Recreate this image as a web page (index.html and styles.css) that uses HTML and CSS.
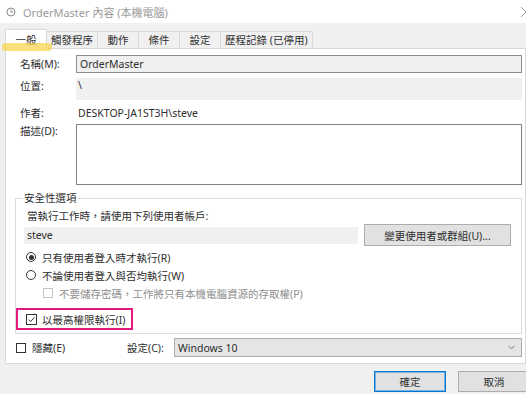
FILE: index.html
```html
<!DOCTYPE html>
<html lang="zh-Hant">
<head>
  <meta charset="UTF-8">
  <meta name="viewport" content="width=device-width, initial-scale=1.0">
  <title>OrderMaster 內容 (本機電腦)</title>
  <link rel="stylesheet" href="styles.css">
</head>
<body>
  <div class="window">
    <div class="titlebar">
      <svg class="title-icon" viewBox="0 0 10 10">
        <circle cx="5" cy="5" r="4" fill="none" stroke="#8a8a8a" stroke-width="1"/>
        <path d="M5 2.6V5h2" fill="none" stroke="#8a8a8a" stroke-width="1"/>
      </svg>
      <span class="title">OrderMaster 內容 (本機電腦)</span>
      <svg class="close" viewBox="0 0 10 10">
        <path d="M0 0L10 10M0 10L10 0" stroke="#9a9a9a" stroke-width="1"/>
      </svg>
    </div>

    <div class="tabs">
      <div class="tab active">一般</div>
      <div class="tab">觸發程序</div>
      <div class="tab">動作</div>
      <div class="tab">條件</div>
      <div class="tab">設定</div>
      <div class="tab">歷程記錄 (已停用)</div>
    </div>
    <div class="marker"></div>

    <div class="panel">
      <div class="row row-name">
        <span class="label">名稱(M):</span>
        <div class="field input">OrderMaster</div>
      </div>
      <div class="row row-loc">
        <span class="label">位置:</span>
        <div class="field readonly">\</div>
      </div>
      <div class="row row-author">
        <span class="label">作者:</span>
        <div class="field plain">DESKTOP-JA1ST3H\steve</div>
      </div>
      <div class="row row-desc">
        <span class="label">描述(D):</span>
        <div class="field textarea"></div>
      </div>

      <fieldset class="group">
        <legend>安全性選項</legend>
        <div class="hint">當執行工作時，請使用下列使用者帳戶:</div>
        <div class="user-row">
          <div class="user">steve</div>
          <button class="btn btn-change">變更使用者或群組(U)...</button>
        </div>
        <div class="option"><span class="radio checked"></span>只有使用者登入時才執行(R)</div>
        <div class="option"><span class="radio"></span>不論使用者登入與否均執行(W)</div>
        <div class="option sub disabled"><span class="check"></span>不要儲存密碼，工作將只有本機電腦資源的存取權(P)</div>
        <div class="option highlight">
          <span class="check checked">
            <svg viewBox="0 0 10 10"><path d="M1.8 5L4 7.3L8.3 2.6" fill="none" stroke="#222" stroke-width="1"/></svg>
          </span>以最高權限執行(I)
        </div>
      </fieldset>

      <div class="bottom-row">
        <div class="option hidden-opt"><span class="check"></span>隱藏(E)</div>
        <span class="config-label">設定(C):</span>
        <div class="select">
          <span>Windows 10</span>
          <svg class="chevron" viewBox="0 0 8 5"><path d="M0.5 0.5L4 4L7.5 0.5" fill="none" stroke="#666" stroke-width="1"/></svg>
        </div>
      </div>
    </div>

    <div class="footer">
      <button class="btn btn-ok">確定</button>
      <button class="btn btn-cancel">取消</button>
    </div>
  </div>
</body>
</html>
```

FILE: styles.css
```css
html {
  background: #fff;
}
body {
  margin: 0;
  font-family: "Noto Sans", "Noto Sans CJK TC", sans-serif;
  font-size: 10.5px;
  color: #2e2e2e;
}
.window {
  position: relative;
  width: 526px;
  height: 394px;
  background: #f0f0f0;
  overflow: hidden;
}
.titlebar {
  display: flex;
  align-items: center;
  height: 23px;
  padding-left: 6px;
  box-sizing: border-box;
  background: #fff;
}
.title-icon {
  width: 10px;
  height: 10px;
  margin-right: 7px;
}
.title {
  color: #9a9a9a;
  font-size: 11px;
}
.close {
  width: 10px;
  height: 10px;
  margin-left: auto;
  margin-right: -5px;
}
.tabs {
  display: flex;
  align-items: flex-end;
  height: 25px;
  padding-left: 5px;
}
.tab {
  min-width: 42px;
  height: 17px;
  line-height: 16px;
  padding: 0 4px;
  margin-right: -1px;
  box-sizing: border-box;
  text-align: center;
  border: 1px solid #d9d9d9;
  border-bottom: none;
}
.tab.active {
  position: relative;
  z-index: 1;
  height: 20px;
  margin-bottom: -1px;
  padding-top: 2px;
  background: #fff;
}
.marker {
  position: absolute;
  left: 2px;
  top: 43px;
  width: 50px;
  height: 8px;
  border-radius: 4px;
  background: rgba(248, 210, 70, 0.7);
  z-index: 2;
}
.panel {
  width: 521px;
  margin-left: 5px;
  box-sizing: border-box;
  padding: 6px 3px 6px 9px;
  background: #fff;
  border: 1px solid #d9d9d9;
}
.row {
  display: flex;
}
.label {
  flex-shrink: 0;
  width: 61px;
  padding-left: 5px;
  box-sizing: border-box;
  line-height: 14px;
}
.field {
  flex: 1;
  box-sizing: border-box;
  line-height: 14px;
}
.row-name {
  align-items: center;
}
.input {
  height: 18px;
  line-height: 16px;
  padding-left: 3px;
  background: #f0f0f0;
  border: 1px solid #8c8c8c;
}
.row-loc {
  margin-top: 5px;
}
.row-loc .label {
  padding-top: 1px;
}
.readonly {
  height: 22px;
  padding-left: 2px;
  background: #f0f0f0;
}
.row-author {
  margin-top: 6px;
}
.plain {
  padding-left: 2px;
}
.row-desc {
  margin-top: 4px;
}
.textarea {
  height: 61px;
  background: #fff;
  border: 1px solid #828282;
}
.group {
  margin: 6px 0 0;
  padding: 0 10px 3px 7px;
  min-width: 0;
  border: 1px solid #dcdcdc;
}
.group legend {
  padding: 0 1px;
  line-height: 14px;
}
.hint {
  margin-top: 4px;
  padding-left: 4px;
  line-height: 14px;
}
.user-row {
  display: flex;
  align-items: center;
  height: 22px;
  margin-top: 1px;
}
.user {
  width: 334px;
  height: 17px;
  margin-left: 1px;
  padding-left: 3px;
  box-sizing: border-box;
  line-height: 17px;
  background: #f0f0f0;
}
.btn {
  font: inherit;
  color: #2e2e2e;
  padding: 0;
  background: #e1e1e1;
  border: 1px solid #adadad;
  box-sizing: border-box;
}
.btn-change {
  width: 147px;
  height: 22px;
  margin-left: 6px;
}
.option {
  display: flex;
  align-items: center;
  height: 14px;
  margin-top: 4px;
  padding-left: 3px;
}
.radio {
  position: relative;
  width: 10px;
  height: 10px;
  margin-right: 6px;
  box-sizing: border-box;
  border: 1px solid #333;
  border-radius: 50%;
}
.radio.checked::after {
  content: "";
  position: absolute;
  left: 1.5px;
  top: 1.5px;
  width: 5px;
  height: 5px;
  border-radius: 50%;
  background: #333;
}
.check {
  display: flex;
  width: 10px;
  height: 10px;
  margin-right: 6px;
  box-sizing: border-box;
  border: 1px solid #333;
  background: #fff;
}
.check svg {
  width: 100%;
  height: 100%;
}
.sub {
  padding-left: 20px;
}
.disabled {
  color: #8e8e8e;
}
.disabled .check {
  border-color: #c4c4c4;
}
.highlight {
  width: 117px;
  height: 22px;
  margin-top: 8px;
  margin-left: -7px;
  padding-left: 8px;
  box-sizing: border-box;
  border: 2px solid #e4197f;
}
.highlight .check {
  width: 11px;
  height: 11px;
  margin-right: 5px;
}
.bottom-row {
  display: flex;
  align-items: center;
  height: 19px;
  margin-top: 4px;
}
.hidden-opt {
  width: 111px;
  margin: 0 0 0 1px;
  padding: 0;
  box-sizing: border-box;
}
.config-label {
  width: 47px;
}
.select {
  flex: 1;
  display: flex;
  align-items: center;
  justify-content: space-between;
  height: 19px;
  padding: 0 6px 0 3px;
  box-sizing: border-box;
  background: #e5e5e5;
  border: 1px solid #acacac;
}
.chevron {
  width: 7px;
  height: 5px;
}
.footer {
  display: flex;
  justify-content: flex-end;
  gap: 12px;
  padding-top: 7px;
}
.footer .btn {
  width: 72px;
  height: 21px;
}
.btn-ok {
  border-color: #0078d7;
  box-shadow: inset 0 0 0 1px rgba(0, 120, 215, 0.45);
}
.btn-cancel {
  margin-right: -4px;
}
```
